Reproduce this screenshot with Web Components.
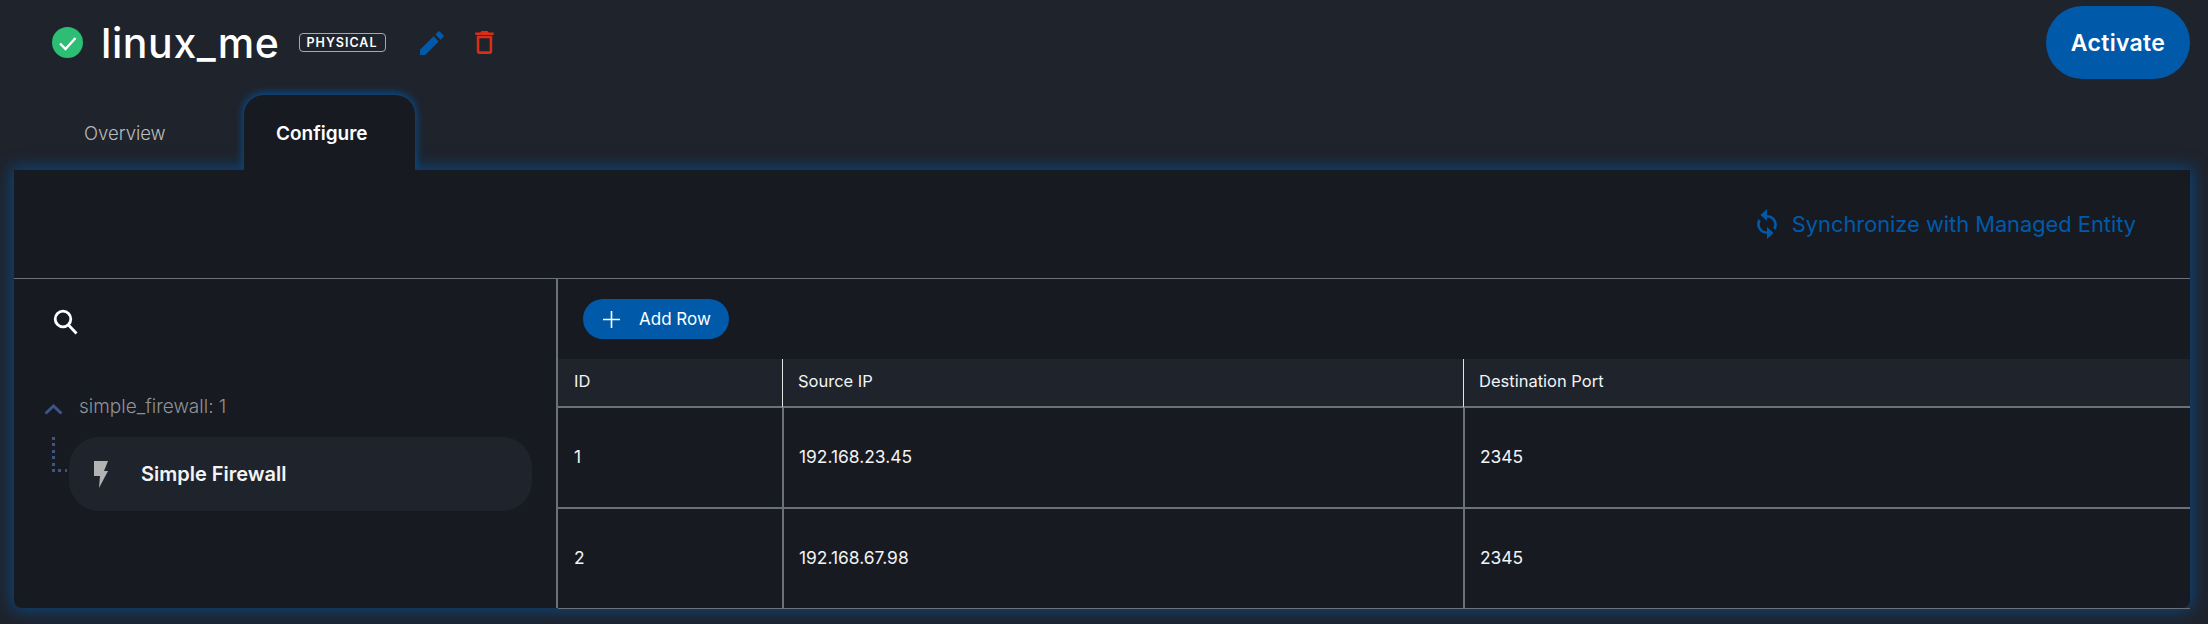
<!doctype html>
<html>
<head>
<meta charset="utf-8">
<title>linux_me</title>
<style>
  html, body { margin: 0; height: 100%; }
  body { background: #1f232c; color: #fff; font-family: Inter, "Noto Sans", sans-serif; overflow: hidden; }
</style>
</head>
<body>
<me-page>
  <me-header slot="header" name="linux_me" kind="PHYSICAL"></me-header>
  <me-tabs slot="tabs"></me-tabs>
  <me-panel slot="panel">
    <me-sync slot="top">Synchronize with Managed Entity</me-sync>
    <me-tree slot="side"></me-tree>
    <me-table slot="main"></me-table>
  </me-panel>
</me-page>

<script>
const define = (name, html) => {
  customElements.define(name, class extends HTMLElement {
    constructor() {
      super()
      const text = typeof html === 'function' ? html(this) : html
      this.attachShadow({ mode: 'open' }).innerHTML = text
    }
  })
}

define('me-page', `
  <style>
  :host { display: block; width: 2208px; height: 624px; }
  .head { height: 95px; }
  .tabs { height: 75px; }
  .panel { margin: 0 18px 0 14px; }
  </style>
  <div class="head"><slot name="header"></slot></div>
  <div class="tabs"><slot name="tabs"></slot></div>
  <div class="panel"><slot name="panel"></slot></div>
`)

define('me-header', el => `
  <style>
  :host { display: flex; align-items: flex-start; justify-content: space-between; padding: 6px 18px 0 52px; height: 89px; }
  .left { display: flex; align-items: center; height: 73px; }
  .check { display: block; width: 31px; height: 31px; }
  h1 { margin: 0 0 0 18px; font-size: 41px; font-weight: 500; letter-spacing: 0.600px; line-height: 44px; }
  .badge { margin-left: 19px; box-sizing: border-box; width: 87px; height: 19px; border: 1px solid #a5a8ae; border-radius: 4px;
    font-size: 12.500px; font-weight: 600; letter-spacing: 1px; line-height: 17px; text-align: center; }
  .edit { display: block; margin-left: 34px; width: 24px; height: 24px; }
  .trash { display: block; margin-left: 31px; width: 19px; height: 23px; }
  button { font: inherit; font-size: 23px; font-weight: 600; color: #fff; background: #005aa9; border: 0; border-radius: 37px;
    width: 144px; height: 73px; letter-spacing: 0.3px; }
  </style>
  <div class="left">
    <svg class="check" viewBox="0 0 31 31"><circle cx="15.500" cy="15.500" r="15.500" fill="#2dbd75"/><path d="M8 16.500l5.500 5.500 10-11" fill="none" stroke="#fff" stroke-width="2.400"/></svg>
    <h1>${el.getAttribute('name')}</h1>
    <span class="badge">${el.getAttribute('kind')}</span>
    <svg class="edit" viewBox="0 0 25 25"><path d="M0 19.600V25h5.400L19.500 10.900 14.100 5.500zM24.200 6.200a1.500 1.500 0 0 0 0-2.100L20.900.8a1.500 1.500 0 0 0-2.100 0l-2.800 2.800 5.400 5.400z" fill="#005aa9"/></svg>
    <svg class="trash" viewBox="0 0 20 25"><path d="M6.500 0h7l1 1.700H20V4.400H0V1.700h5.500z" fill="#d92d16"/><path d="M3 6.500h14v15.500a1.500 1.500 0 0 1-1.500 1.500h-11A1.500 1.500 0 0 1 3 22z" fill="none" stroke="#d92d16" stroke-width="2.800"/></svg>
  </div>
  <button>Activate</button>
`)

define('me-tabs', `
  <style>
  :host { display: flex; height: 75px; padding-left: 84px; align-items: stretch; }
  .off { width: 160px; font-size: 18.500px; font-weight: 300; color: #b9bbbf; line-height: 76px; }
  .on { position: relative; z-index: 2; width: 171px; box-sizing: border-box; padding-left: 32px; background: #171a21; border-radius: 20px 20px 0 0;
    font-size: 19px; font-weight: 600; color: #fff; line-height: 77px;
    box-shadow: 0 -1px 10px #005aa9; clip-path: inset(-14px -14px 0 -14px); }
  </style>
  <div class="off">Overview</div>
  <div class="on">Configure</div>
`)

define('me-panel', `
  <style>
  :host { display: block; width: 2176px; height: 438px; background: #171a21; border-radius: 0 0 8px 8px;
    box-shadow: 0 0 16px 3px rgba(0, 90, 169, .6); }
  .top { height: 108px; border-bottom: 1px solid #6c7079; display: flex; justify-content: flex-end; }
  .body { display: grid; grid-template-columns: 544px 1fr; height: 329px; }
  .side { border-right: 2px solid #6c7079; }
  </style>
  <div class="top"><slot name="top"></slot></div>
  <div class="body">
    <div class="side"><slot name="side"></slot></div>
    <div><slot name="main"></slot></div>
  </div>
`)

define('me-sync', `
  <style>
  :host { display: flex; align-items: center; height: 108px; padding-right: 54px; color: #005aa9;
    font-size: 21.800px; font-weight: 400; }
  svg { width: 24px; height: 30px; margin-right: 13px; }
  </style>
  <svg viewBox="0 0 24 30" fill="#005aa9">
    <path d="M12 6V0L5.500 6l6.500 6V8.400a7.200 7.200 0 0 1 7.200 7.100c0 1.300-.3 2.400-.9 3.500l2.100 2a9.700 9.700 0 0 0 1.500-5.500A9.700 9.700 0 0 0 12 6z"/>
    <path d="M12 22.600a7.200 7.200 0 0 1-7.200-7.100c0-1.300.3-2.400.9-3.500l-2.100-2a9.700 9.700 0 0 0-1.500 5.500A9.700 9.700 0 0 0 12 25v5l6.500-6L12 18z"/>
  </svg>
  <slot></slot>
`)

define('me-tree', `
  <style>
  :host { display: block; height: 329px; box-sizing: border-box; padding: 30px 0 0 39px; position: relative; }
  .search { display: block; width: 25px; height: 26px; }
  .group { display: flex; align-items: center; gap: 16px; margin: 60px 0 0 -9px; height: 24px; color: #8f9297; font-size: 19px; font-weight: 300; line-height: 24px; }
  .group svg { width: 19px; height: 11px; margin-top: 4px; }
  .item { margin: 18px 0 0 16px; position: relative; }
  .dots { position: absolute; left: -17px; top: 0; width: 15px; height: 35px;
    background:
      repeating-linear-gradient(to bottom, #3d5585 0 3px, transparent 3px 6.500px) left top / 3px 100% no-repeat,
      repeating-linear-gradient(to right, #3d5585 0 3px, transparent 3px 6.500px) left bottom / 100% 3px no-repeat; }
  .pill { width: 463px; height: 74px; border-radius: 30px; background: #1f232c;
    display: flex; align-items: center; }
  .pill svg { width: 14px; height: 27px; margin-left: 25px; margin-right: 33px; }
  .pill span { font-size: 20px; font-weight: 600; color: #f3f4f5; }
  </style>
  <svg class="search" viewBox="0 0 25 26"><circle cx="10" cy="10" r="7.800" fill="none" stroke="#fff" stroke-width="2.800"/><path d="M15.500 16l8 8.500" stroke="#fff" stroke-width="2.800"/></svg>
  <div class="group">
    <svg viewBox="0 0 19 11"><path d="M1.500 9.500L9.500 2l8 7.500" fill="none" stroke="#3d5585" stroke-width="3"/></svg>
    <span>simple_firewall: 1</span>
  </div>
  <div class="item">
    <div class="dots"></div>
    <div class="pill">
      <svg viewBox="0 0 14 27"><path d="M0 0H14L10 10H14L5 27 6 15H0z" fill="#b3b3b3"/></svg>
      <span>Simple Firewall</span>
    </div>
  </div>
`)

define('me-table', `
  <style>
  :host { display: block; height: 329px; font-size: 16.500px; color: #f2f3f4; }
  .bar { height: 80px; box-sizing: border-box; padding: 20px 0 0 25px; }
  button { font: inherit; font-size: 17px; color: #fff; background: #005aa9; border: 0; border-radius: 20px; width: 146px; height: 40px;
    display: flex; align-items: center; padding: 0 0 0 20px; gap: 19px; }
  button svg { width: 17px; height: 17px; }
  .grid { display: grid; grid-template-columns: 224px 681px 1fr; }
  .h { height: 47px; background: #1f232c; line-height: 45px; padding-left: 16px; border-bottom: 2px solid #6c7079; }
  .h + .h { border-left: 1px solid #e4e5e7; padding-left: 15px; }
  .c { height: 99px; line-height: 97px; padding-left: 16px; border-bottom: 2px solid #6c7079; font-size: 17.400px; }
  .c:not(.first) { border-left: 2px solid #6c7079; padding-left: 15px; }
  .last { border-bottom-width: 1px; }
  </style>
  <div class="bar">
    <button><svg viewBox="0 0 16 16"><path d="M8 0v16M0 8h16" stroke="#fff" stroke-width="1.500"/></svg>Add Row</button>
  </div>
  <div class="grid">
    <div class="h">ID</div><div class="h">Source IP</div><div class="h">Destination Port</div>
    <div class="c first">1</div><div class="c">192.168.23.45</div><div class="c">2345</div>
    <div class="c first last">2</div><div class="c last">192.168.67.98</div><div class="c last">2345</div>
  </div>
`)
</script>
</body>
</html>
